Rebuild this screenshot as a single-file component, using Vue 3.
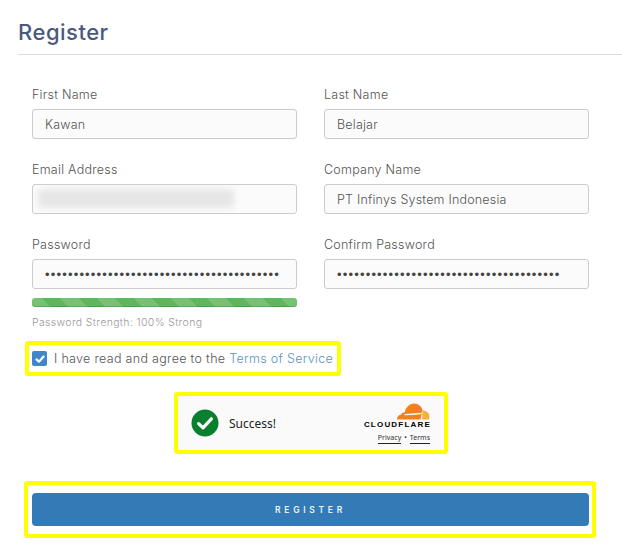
<template>
  <div class="page">
    <h1 class="title">Register</h1>

    <form class="form" @submit.prevent>
      <div class="grid">
        <div v-for="field in fields" :key="field.label" class="field">
          <label class="label">{{ field.label }}</label>
          <div class="input-wrap">
            <input class="input" :class="{ dots: field.type === 'password' }" :type="field.type" :value="field.value" readonly />
            <div v-if="field.blurred" class="blur"></div>
          </div>
          <template v-if="field.strength">
            <div class="progress"></div>
            <p class="strength">Password Strength: 100% Strong</p>
          </template>
        </div>
      </div>

      <div class="agree-row">
        <div class="mark agree">
          <span class="check">
            <svg width="12" height="12" viewBox="0 0 12 12" fill="none" stroke="#fff" stroke-width="2.2" stroke-linecap="round" stroke-linejoin="round">
              <polyline points="2.5 6.4 5 8.7 9.6 3.6"></polyline>
            </svg>
          </span>
          <span>I have read and agree to the <a class="link">Terms of Service</a></span>
        </div>
      </div>

      <div class="captcha-row">
        <div class="mark captcha">
          <div class="captcha-status">
            <svg width="28" height="28" viewBox="0 0 28 28">
              <circle cx="14" cy="14" r="13.5" fill="#0a7f2e"></circle>
              <polyline points="7.6 14.6 12 18.8 20.4 9.8" fill="none" stroke="#fff" stroke-width="3.2" stroke-linecap="round" stroke-linejoin="round"></polyline>
            </svg>
            <span class="success">Success!</span>
          </div>
          <div class="brand">
            <svg class="cloud" width="34" height="17" viewBox="0 0 34 17">
              <path d="M1 16.5c0-2.6 1.8-4.6 4.2-4.9.5-1.5 2-2.4 3.4-2C10 4.200 13.500.6 18 .6c4.400 0 7.800 2.900 8.600 7L26 9.800 9 11l-1 1.200 17.400-.4-.9 4.700z" fill="#f38020"></path>
              <path d="M26.400 7.400c3.700-.2 6.900 2.400 7.100 6 0 1-.2 2.100-.5 3.100H25.800l.9-4.600-9.400-.2 9.700-1.100z" fill="#faae40"></path>
            </svg>
            <div class="wordmark">CLOUDFLARE</div>
            <div class="legal"><a>Privacy</a><i>•</i><a>Terms</a></div>
          </div>
        </div>
      </div>

      <div class="mark submit">
        <button class="btn" type="submit">REGISTER</button>
      </div>
    </form>
  </div>
</template>

<script setup>
const fields = [
  { label: 'First Name', type: 'text', value: 'Kawan' },
  { label: 'Last Name', type: 'text', value: 'Belajar' },
  { label: 'Email Address', type: 'text', value: '', blurred: true },
  { label: 'Company Name', type: 'text', value: 'PT Infinys System Indonesia' },
  { label: 'Password', type: 'password', value: 'x'.repeat(41), strength: true },
  { label: 'Confirm Password', type: 'password', value: 'x'.repeat(39) }
]
</script>

<style>
html,
body {
  background: #fff;
}
</style>

<style scoped>
.page {
  width: 622px;
  height: 547px;
  box-sizing: border-box;
  padding: 17px 0 0 18px;
  overflow: hidden;
  font-family: Inter, "Open Sans", "Liberation Sans", sans-serif;
  color: #666;
}

.title {
  margin: 0;
  height: 37px;
  border-bottom: 1px solid #ddd;
  font-size: 22px;
  line-height: 30px;
  font-weight: 500;
  letter-spacing: 0.5px;
  color: #4a5a7c;
}

.form {
  padding: 30px 33px 0 14px;
}

.grid {
  display: grid;
  grid-template-columns: 265px 265px;
  column-gap: 27px;
  row-gap: 21px;
}

.field {
  min-width: 0;
}

.label {
  display: block;
  height: 24px;
  font-size: 12.5px;
  line-height: 20px;
  font-weight: 300;
  letter-spacing: 0.25px;
  color: #555;
}

.input-wrap {
  position: relative;
}

.input {
  display: block;
  width: 100%;
  height: 30px;
  box-sizing: border-box;
  padding: 0 12px;
  border: 1px solid #ccc;
  border-radius: 3px;
  background: #fbfbfb;
  font-family: inherit;
  font-size: 12.5px;
  font-weight: 300;
  letter-spacing: 0.2px;
  color: #555;
  outline: none;
}

.dots {
  font-family: "Liberation Sans", sans-serif;
  font-size: 13px;
  letter-spacing: 1.18px;
  color: #444;
}

.blur {
  position: absolute;
  left: 6px;
  top: 5px;
  width: 196px;
  height: 19px;
  background: #e6e6e6;
  border-radius: 4px;
  filter: blur(3px);
}

.progress {
  height: 9px;
  margin-top: 9px;
  border-radius: 3px;
  background: repeating-linear-gradient(45deg, #74c374 0, #74c374 13px, #5cb85c 13px, #5cb85c 26px);
  box-shadow: inset 0 -1px 0 rgba(0, 0, 0, 0.15);
}

.strength {
  margin: 9px 0 0;
  font-size: 10.500px;
  line-height: 14px;
  font-weight: 300;
  letter-spacing: 0.35px;
  color: #999;
}

.mark {
  box-sizing: border-box;
  border: 4px solid #ff0;
  border-radius: 3px;
}

.agree-row {
  margin: 11px 0 0 -7px;
  height: 36px;
}

.agree {
  display: flex;
  align-items: center;
  gap: 7px;
  width: 316px;
  height: 35px;
  padding-left: 3px;
  font-size: 12.5px;
  font-weight: 300;
  letter-spacing: 0.31px;
  white-space: nowrap;
  color: #555;
}

.check {
  display: flex;
  align-items: center;
  justify-content: center;
  width: 15px;
  height: 15px;
  border-radius: 2px;
  background: #3f87c9;
}

.link {
  color: #5b93c2;
}

.captcha-row {
  display: flex;
  justify-content: center;
  width: 558px;
  margin-top: 15px;
}

.captcha {
  display: flex;
  align-items: center;
  justify-content: space-between;
  width: 274px;
  height: 62px;
  padding: 0 14px 0 13px;
  background: #fafafa;
}

.captcha-status {
  display: flex;
  align-items: center;
  gap: 10px;
}

.success {
  font-family: "Noto Sans", "Open Sans", sans-serif;
  font-size: 12px;
  color: #232323;
}

.brand {
  display: flex;
  flex-direction: column;
  align-items: flex-end;
  width: 67px;
}

.cloud {
  display: block;
}

.wordmark {
  font-family: "Liberation Sans", sans-serif;
  font-size: 8px;
  line-height: 9px;
  font-weight: 700;
  letter-spacing: 1.2px;
  margin-right: -1px;
  color: #000;
}

.legal {
  display: flex;
  gap: 3px;
  margin-top: 4px;
  font-family: "Noto Sans", sans-serif;
  font-size: 7px;
  line-height: 10px;
  color: #333;
}

.legal a {
  border-bottom: 1px solid #222;
}

.legal i {
  font-style: normal;
}

.submit {
  width: 572px;
  height: 57px;
  margin: 27px 0 0 -8px;
  padding: 8px 3px 8px 4px;
}

.btn {
  display: block;
  width: 100%;
  height: 33px;
  border: 0;
  border-radius: 4px;
  background: #337ab7;
  color: #eef4fa;
  font-family: inherit;
  font-size: 8.500px;
  font-weight: 600;
  letter-spacing: 3.7px;
}
</style>
